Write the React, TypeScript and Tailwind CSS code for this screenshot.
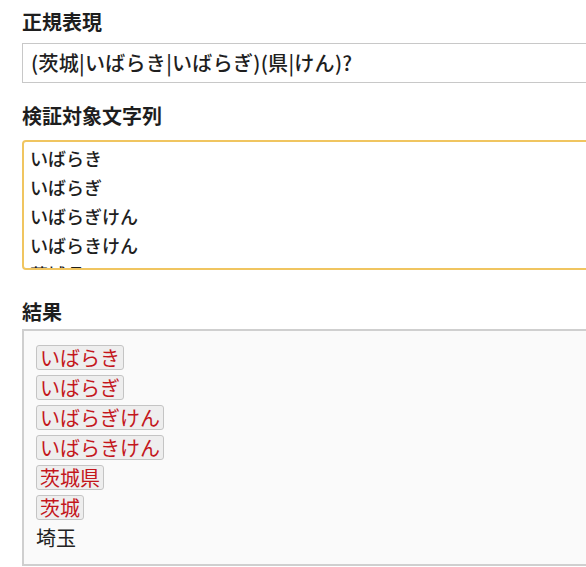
import React from "react";

const font = { fontFamily: '"Noto Sans CJK JP", "Noto Sans", sans-serif' };

export default function App() {
  const matches = ["いばらき", "いばらぎ", "いばらぎけん", "いばらきけん", "茨城県", "茨城"];
  return (
    <div className="w-[586px] h-[567px] overflow-hidden bg-white text-[#1e1e1e]" style={font}>
      <div className="w-[640px] pl-[22px] pt-[7px]">
        <div className="text-[20px] leading-[30px] font-bold">正規表現</div>
        <div className="mt-[6px] h-[40px] border border-[#c8c8c8] pl-[8px] flex items-center text-[20px] tracking-[0.3px] font-medium">
          (茨城|いばらき|いばらぎ)(県|けん)?
        </div>
        <div className="mt-[18px] text-[20px] leading-[30px] font-bold">検証対象文字列</div>
        <div className="mt-[9px] h-[130px] border-2 border-[#f0c560] rounded-[4px] pl-[6px] pt-[2px] overflow-hidden text-[18px] leading-[29px] font-medium">
          <div>いばらき</div>
          <div>いばらぎ</div>
          <div>いばらぎけん</div>
          <div>いばらきけん</div>
          <div>茨城県</div>
        </div>
        <div className="mt-[27px] text-[20px] leading-[30px] font-bold">結果</div>
        <div className="mt-[2px] h-[237px] border-2 border-[#cfcfcf] bg-[#fafafa] pl-[12px] pt-[14px] text-[20px]">
          <div className="flex flex-col items-start gap-[5px]">
            {matches.map((m) => (
              <span
                key={m}
                className="h-[25px] flex items-center border border-[#c4c4c4] bg-[#eeeeee] rounded-[3px] px-[3px] text-[#c4161c] leading-none"
              >
                {m}
              </span>
            ))}
            <span className="h-[25px] flex items-center leading-none text-[#222]">埼玉</span>
          </div>
        </div>
      </div>
    </div>
  );
}
